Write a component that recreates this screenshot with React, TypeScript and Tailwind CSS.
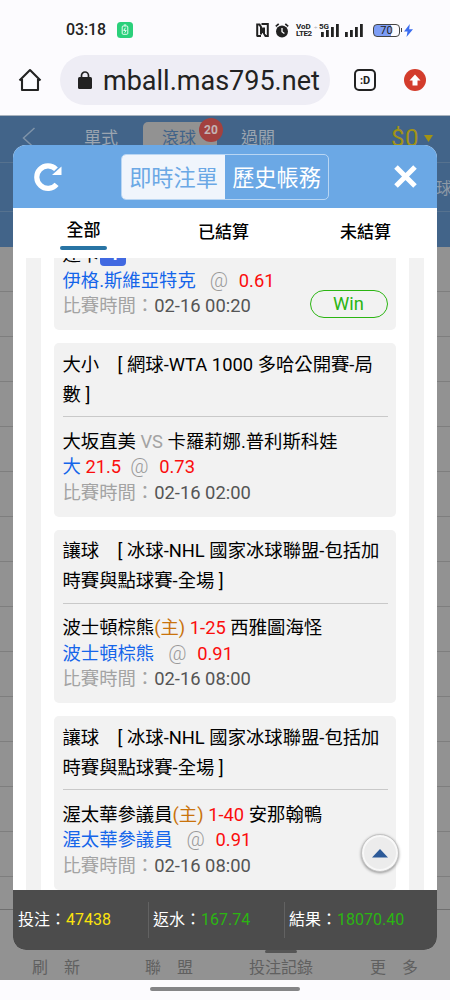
import { useState } from "react";
import type { ReactNode } from "react";

type Bet = {
  title: string[];
  match: ReactNode;
  pick: ReactNode;
  odds: string;
  time: string;
  win?: boolean;
};

const bets: Bet[] = [
  {
    title: [],
    match: (
      <>
        達卡
        <span className="ml-[1px] flex h-[24px] w-[26px] items-center justify-center rounded-[4px] bg-[#4169e1] text-[18px] font-bold text-white">
          4
        </span>
      </>
    ),
    pick: <span className="mr-[14px]">伊格.斯維亞特克</span>,
    odds: "0.61",
    time: "02-16 00:20",
    win: true,
  },
  {
    title: ["大小　[ 網球-WTA 1000 多哈公開賽-局", "數 ]"],
    match: (
      <span>
        大坂直美 <span className="text-[#a3a3a3]">VS</span> 卡羅莉娜.普利斯科娃
      </span>
    ),
    pick: (
      <span className="mr-[9px]">
        大 <span className="text-[#fb0d0d]">21.5</span>
      </span>
    ),
    odds: "0.73",
    time: "02-16 02:00",
  },
  {
    title: ["讓球　[ 冰球-NHL 國家冰球聯盟-包括加", "時賽與點球賽-全場 ]"],
    match: (
      <span>
        波士頓棕熊<span className="text-[#c9730c]">(主)</span>{" "}
        <span className="text-[#fb0d0d]">1-25</span> 西雅圖海怪
      </span>
    ),
    pick: <span className="mr-[14px]">波士頓棕熊</span>,
    odds: "0.91",
    time: "02-16 08:00",
  },
  {
    title: ["讓球　[ 冰球-NHL 國家冰球聯盟-包括加", "時賽與點球賽-全場 ]"],
    match: (
      <span>
        渥太華參議員<span className="text-[#c9730c]">(主)</span>{" "}
        <span className="text-[#fb0d0d]">1-40</span> 安那翰鴨
      </span>
    ),
    pick: <span className="mr-[14px]">渥太華參議員</span>,
    odds: "0.91",
    time: "02-16 08:00",
  },
];

function Signal({ className }: { className?: string }) {
  return (
    <svg className={className} width="18" height="13" viewBox="0 0 18 13" fill="#222">
      <rect x="0" y="8" width="2.8" height="5" />
      <rect x="5" y="6" width="2.8" height="7" />
      <rect x="10" y="3" width="2.8" height="10" />
      <rect x="15" y="0" width="2.8" height="13" />
    </svg>
  );
}

function StatusBar() {
  return (
    <div className="flex h-[45px] items-end pl-[66px]">
      <div className="flex h-[30px] w-full items-center">
        <span className="w-[40px] text-[16px] leading-none font-medium tracking-[-0.1px] text-[#222]">
          03:18
        </span>
        <svg className="ml-[11px]" width="16" height="16" viewBox="0 0 16 16" fill="none">
          <rect width="16" height="16" rx="3.5" fill="#2bd07b" />
          <rect x="5.2" y="4" width="5.6" height="8.3" rx="1" stroke="#fff" strokeWidth="0.9" />
          <path d="M6.8 3h2.4" stroke="#fff" />
          <path d="M8.5 5.7 6.7 8.4h2.5L7.6 10.8" stroke="#fff" strokeWidth="0.9" />
        </svg>
        <svg className="ml-[123px]" width="13" height="14" viewBox="0 0 13 14" fill="none" stroke="#222" strokeWidth="2">
          <path d="M1.200 13.500V1.500h2.300L8 9V4.500M5.500 1h6.300v12H9.500L5 5.500V11.500M1 13h4" />
        </svg>
        <svg className="ml-[6px]" width="14" height="15" viewBox="0 0 14 15">
          <circle cx="7" cy="8.5" r="6" fill="#222" />
          <path d="M.8 3.4 3.7.9M13.2 3.4 10.3.9" stroke="#222" strokeWidth="1.7" />
          <path d="M7 5v3.7l2.4 1.8" fill="none" stroke="#fff" strokeWidth="1.3" />
        </svg>
        <div className="ml-[7px] flex w-[16px] flex-col text-[8px] leading-[7px] font-bold text-[#222]">
          <span>VoD</span>
          <span className="tracking-[-0.5px]">LTE2</span>
        </div>
        <div className="relative ml-[9px] h-[13px] w-[18px]">
          <span className="absolute -top-[1px] -left-[2px] z-10 bg-[#fcfbfe] text-[8px] leading-[7px] font-bold text-[#222]">
            5G
          </span>
          <span className="absolute top-0 -left-[7px] text-[6px] leading-[6px] text-[#999]">÷</span>
          <Signal />
        </div>
        <Signal className="ml-[6px]" />
        <div className="relative ml-[10px] flex h-[13px] w-[27px] items-center justify-center rounded-[4px] border-[1.5px] border-[#444] bg-[linear-gradient(to_right,#7d9df5_68%,#fcfbfe_68%)] text-[11px] leading-none text-[#222]">
          70
          <span className="absolute top-[3px] -right-[3px] h-[4px] w-[1.5px] bg-[#444]" />
        </div>
        <svg className="ml-[4px]" width="9" height="13" viewBox="0 0 9 13" fill="#3b6df0">
          <path d="M5.8 0 0 7.4h3.5L2.5 13 9 5.2H5.2z" />
        </svg>
      </div>
    </div>
  );
}

function AddressBar() {
  return (
    <div className="flex h-[70px] items-center pl-[18px]">
      <svg className="-mt-px" width="24" height="24" viewBox="0 0 24 24" fill="none" stroke="#222" strokeWidth="2.1">
        <path d="M4 11v11h16V11M1.5 12.5 12 2l10.500 10.500" strokeLinejoin="round" />
      </svg>
      <div className="ml-[18px] flex h-[50px] w-[270px] items-center overflow-hidden rounded-full bg-[#eeedf5] pl-[18px]">
        <svg className="-mt-px shrink-0" width="14" height="18" viewBox="0 0 14 18">
          <rect y="6" width="14" height="12" rx="1.500" fill="#222" />
          <path d="M3.500 7V4.500a3.500 3.500 0 0 1 7 0V7" fill="none" stroke="#222" strokeWidth="1.700" />
        </svg>
        <span className="mt-[3px] ml-[11px] text-[27px] leading-none whitespace-nowrap text-[#222]">
          mball.mas795.net
        </span>
      </div>
      <div className="ml-[24px] flex h-[22px] w-[22px] items-center justify-center rounded-[5px] border-2 border-[#222] text-[11px] leading-none font-bold text-[#222]">
        :D
      </div>
      <div className="ml-[28px] flex h-[22px] w-[22px] items-center justify-center rounded-full bg-[#d33c2c]">
        <svg width="14" height="14" viewBox="0 0 14 14" fill="#fff">
          <path d="M7 1.500 1.500 7.500h3V12.500h5V7.500h3z" />
        </svg>
      </div>
    </div>
  );
}

// dimmed page that stays behind the dialog
function Backdrop() {
  return (
    <div className="flex h-full flex-col bg-[#929292]">
      <div className="flex h-[132px] shrink-0 flex-col border-t border-[#a9b3be] bg-[#426489]">
        <div className="flex h-[47px] border-b border-[#56728f] pt-[6px] text-[17px] text-[#9ba5b0]">
          <svg className="mt-[5px] ml-[22px]" width="14" height="22" viewBox="0 0 14 22" fill="none" stroke="#7f93a8" strokeWidth="1.500">
            <path d="M12.500 1 1.500 11l11 10" />
          </svg>
          <span className="ml-[48px] pt-[4px]">單式</span>
          <div className="relative ml-[25px] h-[40px] w-[74px] rounded-[5px] bg-[#929292] pt-[4px] pl-[19px] text-[#426489]">
            滾球
            <span className="absolute -top-[4px] left-[56px] flex h-[24px] w-[24px] items-center justify-center rounded-full bg-[#a3413f] text-[12px] font-bold text-[#c4b4b4]">
              20
            </span>
          </div>
          <span className="ml-[24px] pt-[4px]">過關</span>
          <span className="ml-[116px] text-[24px] leading-[32px] tracking-[0.5px] text-[#a29314]">$0</span>
          <svg className="mt-[13px] ml-[5px]" width="9" height="7" viewBox="0 0 9 7" fill="#a29314">
            <path d="M0 0h9L4.500 7z" />
          </svg>
        </div>
        <div className="flex h-[49px] items-center justify-end border-b border-[#56728f] text-[16px] text-[#8d99a6]">
          <span className="-mr-[2px] pt-[3px]">球</span>
        </div>
      </div>
      {Array.from({ length: 14 }, (_, i) => (
        <div key={i} className="h-[45px] shrink-0 border-b border-[#7e7e7e]" />
      ))}
      <div className="h-[33px] shrink-0 border-b border-[#6f6f6f]" />
      <div className="flex grow items-end pl-[32px] text-[16px] text-[#606060]">
        <span className="w-[113px]">刷　新</span>
        <span className="relative w-[104px]">聯　盟</span>
        <span className="relative w-[121px]">
          投注記錄
          <span className="absolute -top-[6px] left-[16px] h-[3px] w-[32px] rounded-full bg-[#555]" />
        </span>
        <span>更　多</span>
      </div>
    </div>
  );
}

function BetCard({ bet }: { bet: Bet }) {
  return (
    <div className="mb-[13px] shrink-0 rounded-[5px] bg-[#f2f2f2] pt-[6px] pr-[8px] pb-[11.600px] pl-[8.500px] last:mb-0">
      {bet.title.length > 0 && (
        <div className="mb-[11.500px] border-b border-[#c9c9c9] pt-[0.500px] pb-[6.500px] leading-[30px] whitespace-nowrap">
          {bet.title.map((line) => (
            <div key={line}>{line}</div>
          ))}
        </div>
      )}
      <div className="relative leading-[25.500px]">
        <div className="flex h-[25.500px] whitespace-nowrap">{bet.match}</div>
        <div className="flex text-[#1465ea]">
          {bet.pick}
          <span className="w-[29px] text-[20px] font-light text-[#999]">@</span>
          <span className="text-[#fb0d0d]">{bet.odds}</span>
        </div>
        <div className="text-[#a3a3a3]">
          比賽時間：<span className="text-[#555]">{bet.time}</span>
        </div>
        {bet.win && (
          <div className="absolute right-0 bottom-[0.500px] flex h-[28px] w-[78px] items-center justify-center rounded-full border-[1.500px] border-[#2bb512] text-[#2bb512]">
            Win
          </div>
        )}
      </div>
    </div>
  );
}

const filters = ["全部", "已結算", "未結算"];

function App() {
  const [filter, setFilter] = useState(0);

  return (
    <div className="flex h-[1000px] w-[450px] flex-col overflow-hidden bg-[#fcfbfe] font-['Roboto','Noto_Sans_CJK_TC',sans-serif]">
      <StatusBar />
      <AddressBar />
      <div className="relative h-[865px] shrink-0 overflow-hidden">
        <Backdrop />
        <div className="absolute top-[30px] left-[13px] flex h-[805px] w-[423.500px] flex-col overflow-hidden rounded-[13px] bg-white">
          <div className="flex h-[63px] shrink-0 items-center bg-[#6ba8e5]">
            <svg className="ml-[21px]" width="29" height="28" viewBox="0 0 29 28" fill="none">
              <path d="M22.600 21.300A11.200 11.200 0 1 1 22 6.300" stroke="#fff" strokeWidth="5.200" />
              <path d="M27.500 3.500v8.500h-9.500z" fill="#fff" />
            </svg>
            <div className="ml-[58px] flex h-[46px] w-[208px] overflow-hidden rounded-[5px] border border-[#b9d6f3] text-[22.200px] leading-[47px]">
              <button className="w-[103px] bg-[#f0f5fc] text-[#6ba8e5]">即時注單</button>
              <button className="grow text-white">歷史帳務</button>
            </div>
            <svg className="ml-[65px]" width="23" height="23" viewBox="0 0 23 23" stroke="#fff" strokeWidth="5">
              <path d="m2 2 19 19M21 2 2 21" />
            </svg>
          </div>
          <div className="flex h-[50px] shrink-0 pl-[47px] text-[17px] font-medium text-black">
            {filters.map((name, i) => (
              <button
                key={name}
                onClick={() => setFilter(i)}
                className={
                  i === 0
                    ? "mr-[91px] flex w-[47px] flex-col items-center pt-[9px]"
                    : "mr-[91px] flex w-[51px] flex-col items-center pt-[11px]"
                }
              >
                <span className="leading-[26px] whitespace-nowrap">{name}</span>
                {filter === i && <span className="mt-[3px] h-[4px] w-[47px] rounded-full bg-[#2874a4]" />}
              </button>
            ))}
          </div>
          <div className="mx-[13px] flex h-[632px] shrink-0 bg-[#f2f2f2] px-[15px]">
            <div className="flex w-full flex-col justify-end overflow-hidden bg-white px-[13px] text-[18.350px] text-black">
              {bets.map((bet, i) => (
                <BetCard key={i} bet={bet} />
              ))}
            </div>
          </div>
          <div className="flex grow items-center bg-[#4c4c4c] pl-[5px] text-[16px] text-white">
            <div className="flex h-[36px] w-[131px] items-center border-r border-[#626262]">
              投注：<span className="text-[#fbe30c]">47438</span>
            </div>
            <div className="flex h-[36px] w-[136px] items-center border-r border-[#626262] pl-[4px]">
              返水：<span className="text-[#2bb512]">167.74</span>
            </div>
            <div className="flex h-[36px] items-center pl-[4px]">
              結果：<span className="text-[#2bb512]">18070.40</span>
            </div>
          </div>
          <button className="absolute top-[689px] right-[38px] flex h-[38px] w-[38px] items-center justify-center rounded-full border border-[#c4c4c4] bg-[#ececec] shadow-[0_1px_3px_#0006,inset_0_0_0_2px_#f8f8f8]">
            <svg width="16" height="9" viewBox="0 0 16 9" fill="#2c5a98">
              <path d="M8 0 16 8.500H0z" />
            </svg>
          </button>
        </div>
      </div>
      <div className="flex h-[20px] justify-center pt-[7px]">
        <span className="h-[4px] w-[150px] rounded-full bg-[#858587]" />
      </div>
    </div>
  );
}

export default App;
